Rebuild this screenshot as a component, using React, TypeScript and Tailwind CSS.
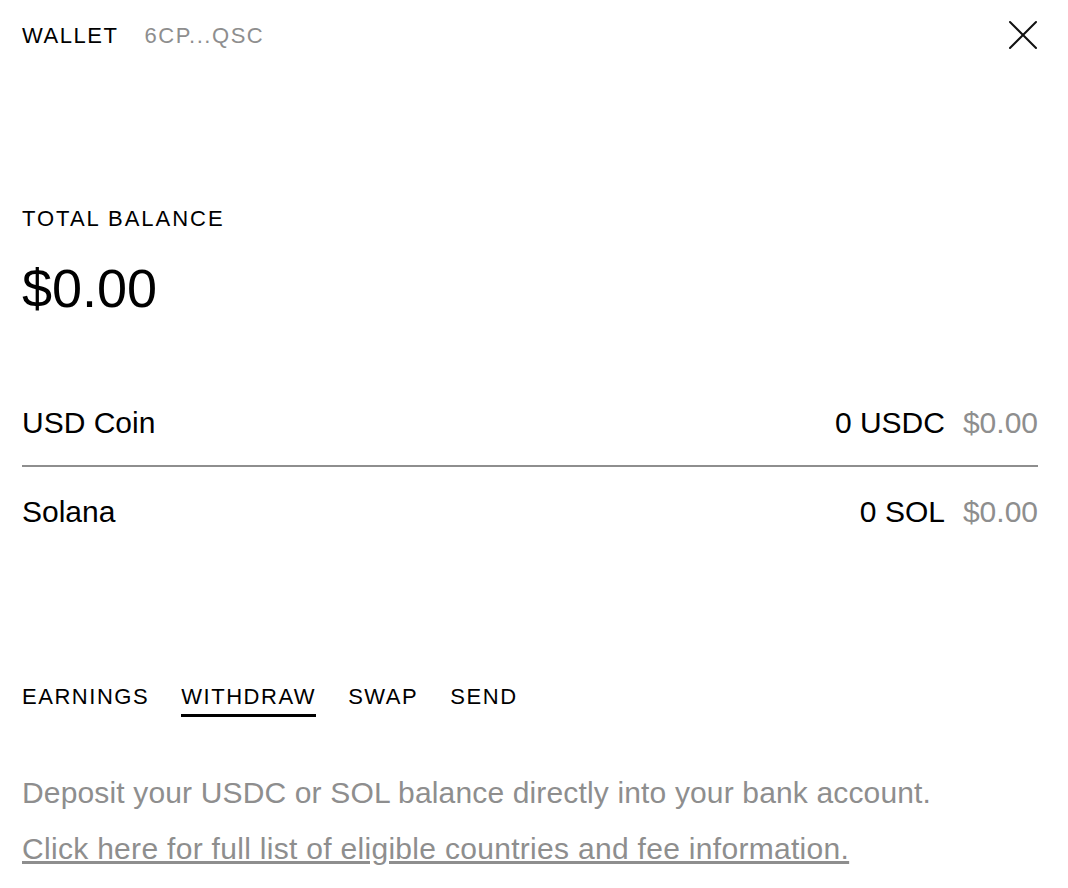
import React from "react";

const tabs = ["EARNINGS", "WITHDRAW", "SWAP", "SEND"];

const assets = [
  { name: "USD Coin", amount: "0 USDC", value: "$0.00" },
  { name: "Solana", amount: "0 SOL", value: "$0.00" },
];

const App = () => {
  return (
    <div
      className="min-h-screen bg-white text-black pl-[22px] pr-[30px]"
      style={{ fontFamily: '"Liberation Sans", Arial, sans-serif' }}
    >
      <header className="flex items-center justify-between h-[70px]">
        <div className="flex items-center gap-[26px] text-[22px] tracking-[0.07em]">
          <span>WALLET</span>
          <span className="text-[#8e8e8e]">6CP...QSC</span>
        </div>
        <button className="w-[30px] h-[30px] flex items-center justify-center">
          <svg width="30" height="30" viewBox="0 0 30 30" fill="none">
            <path
              d="M2 2L28 28M28 2L2 28"
              stroke="#111"
              strokeWidth="2"
              strokeLinecap="round"
            />
          </svg>
        </button>
      </header>

      <section className="pt-[134px]">
        <div className="text-[22px] tracking-[0.09em] leading-[30px]">TOTAL BALANCE</div>
        <div className="text-[54px] leading-[56px] mt-[26px]">$0.00</div>
      </section>

      <section className="mt-[63px]">
        {assets.map((a, i) => (
          <div
            key={a.name}
            className={`flex items-center justify-between h-[88px] text-[30px] ${
              i === 0 ? "border-b-2 border-[#8e8e8e]" : ""
            }`}
          >
            <span>{a.name}</span>
            <div className="flex items-center gap-[18px]">
              <span>{a.amount}</span>
              <span className="text-[#8e8e8e]">{a.value}</span>
            </div>
          </div>
        ))}
      </section>

      <nav className="flex items-center gap-[32px] mt-[127px] text-[22px] leading-[30px] tracking-[0.07em]">
        {tabs.map((t) => (
          <span
            key={t}
            className={`pb-[2px] border-b-[3px] ${
              t === "WITHDRAW" ? "border-black" : "border-transparent"
            }`}
          >
            {t}
          </span>
        ))}
      </nav>

      <div className="mt-[56px] text-[30px] text-[#8e8e8e] leading-[40px]">
        <p className="tracking-[0.005em]">
          Deposit your USDC or SOL balance directly into your bank account.
        </p>
        <a href="#" className="underline block mt-[16px] tracking-[0.01em]">
          Click here for full list of eligible countries and fee information.
        </a>
      </div>
    </div>
  );
};

export default App;
